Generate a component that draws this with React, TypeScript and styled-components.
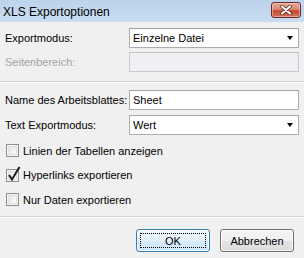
import styled, { createGlobalStyle } from 'styled-components';

const GlobalStyle = createGlobalStyle`
  html, body {
    margin: 0;
    padding: 0;
    background: #f0f0f0;
  }
  * {
    box-sizing: border-box;
  }
`;

const Window = styled.div`
  display: flex;
  flex-direction: column;
  width: 304px;
  height: 258px;
  background: #f0f0f0;
  font-family: 'Liberation Sans', Arial, sans-serif;
  font-size: 11px;
  color: #000;
  overflow: hidden;
`;

const TitleBar = styled.div`
  display: flex;
  align-items: center;
  justify-content: space-between;
  height: 22px;
  padding: 0 3px 0 3px;
  background: linear-gradient(to bottom, #bcd3ec 0%, #c3d8ef 50%, #c9dcf1 100%);
`;

const Title = styled.span`
  font-size: 12px;
  color: #000;
  padding-top: 1px;
`;

const CloseButton = styled.div`
  display: flex;
  align-items: center;
  justify-content: center;
  width: 30px;
  height: 16px;
  margin-top: -3px;
  border: 1px solid #6b2a2a;
  border-radius: 3px;
  background: linear-gradient(to bottom, #e8a493 0%, #d98a77 45%, #c24a32 55%, #d2735c 100%);
  box-shadow: inset 0 0 0 1px rgba(255, 220, 210, 0.5);
`;

const Body = styled.div`
  display: flex;
  flex-direction: column;
  flex: 1;
`;

const Section = styled.div<{ $gap: number; $top: number; $bottom: number }>`
  display: flex;
  flex-direction: column;
  gap: ${({ $gap }) => $gap}px;
  padding: ${({ $top }) => $top}px 5px ${({ $bottom }) => $bottom}px 5px;
`;

const FieldRow = styled.div`
  display: grid;
  grid-template-columns: 124px 170px;
  align-items: center;
  height: 20px;
`;

const Label = styled.span<{ $disabled?: boolean }>`
  color: ${({ $disabled }) => ($disabled ? '#a3a3a3' : '#000')};
  white-space: nowrap;
`;

const Field = styled.div<{ $disabled?: boolean }>`
  position: relative;
  display: flex;
  align-items: center;
  height: 20px;
  padding-left: 3px;
  border: 1px solid ${({ $disabled }) => ($disabled ? '#c9c9cc' : '#abadb3')};
  border-top-color: ${({ $disabled }) => ($disabled ? '#c0c0c4' : '#a0a2a8')};
  background: ${({ $disabled }) => ($disabled ? '#f0f0f4' : '#fff')};
`;

const Arrow = styled.span`
  position: absolute;
  right: 5px;
  top: 7px;
  width: 0;
  height: 0;
  border-left: 3.5px solid transparent;
  border-right: 3.5px solid transparent;
  border-top: 4px solid #000;
`;

const Separator = styled.div`
  height: 2px;
  border-top: 1px solid #d5d5d5;
  border-bottom: 1px solid #fff;
`;

const CheckList = styled.div`
  display: flex;
  flex-direction: column;
  gap: 11.5px;
  padding: 9px 5px 10px 6px;
`;

const CheckRow = styled.div`
  display: flex;
  align-items: center;
  gap: 4px;
  height: 13px;
`;

const Box = styled.span`
  position: relative;
  display: inline-block;
  width: 13px;
  height: 13px;
  border: 1px solid #8e8f8f;
  background: linear-gradient(135deg, #dcdcdc 0%, #f4f4f4 60%, #ffffff 100%);
  box-shadow: inset 0 0 0 1px #f4f4f4, inset 0 0 0 2px #e1e1e1;
`;

const Check = styled.svg`
  position: absolute;
  left: 0px;
  top: -5px;
`;

const Footer = styled.div`
  display: flex;
  justify-content: flex-end;
  gap: 10px;
  padding: 11px 10px 0 0;
`;

const Button = styled.div<{ $default?: boolean }>`
  position: relative;
  display: flex;
  align-items: center;
  justify-content: center;
  width: 74px;
  height: 23px;
  border: 1px solid ${({ $default }) => ($default ? '#3c7fb1' : '#707070')};
  border-radius: 3px;
  background: ${({ $default }) =>
    $default
      ? 'linear-gradient(to bottom, #eef6fd 0%, #e3f0fc 50%, #d6eafb 51%, #cfe5fa 100%)'
      : 'linear-gradient(to bottom, #f4f4f4 0%, #eeeeee 50%, #e4e4e4 51%, #dcdcdc 100%)'};
  box-shadow: inset 0 0 0 1px rgba(255, 255, 255, 0.7);
`;

const FocusRing = styled.span`
  position: absolute;
  inset: 3px;
  border: 1px dotted #000;
`;

function CheckBox({ label, checked }: { label: string; checked?: boolean }) {
  return (
    <CheckRow>
      <Box>
        {checked && (
          <Check width="14" height="17" viewBox="0 0 14 17">
            <path d="M2 10 L5 14.5 L12.5 2" fill="none" stroke="#1a1a1a" strokeWidth="2" />
          </Check>
        )}
      </Box>
      <span>{label}</span>
    </CheckRow>
  );
}

export default function App() {
  return (
    <>
      <GlobalStyle />
      <Window>
        <TitleBar>
          <Title>XLS Exportoptionen</Title>
          <CloseButton>
            <svg width="12" height="10" viewBox="0 0 12 10">
              <path d="M2 1.5 L10 8.5 M10 1.5 L2 8.5" stroke="#5a1a10" strokeWidth="3.6" strokeLinecap="round" />
              <path d="M2 1.5 L10 8.5 M10 1.5 L2 8.5" stroke="#fff" strokeWidth="2.2" strokeLinecap="round" />
            </svg>
          </CloseButton>
        </TitleBar>
        <Body>
          <Section $gap={4} $top={6} $bottom={9}>
            <FieldRow>
              <Label>Exportmodus:</Label>
              <Field>
                Einzelne Datei
                <Arrow />
              </Field>
            </FieldRow>
            <FieldRow>
              <Label $disabled>Seitenbereich:</Label>
              <Field $disabled />
            </FieldRow>
          </Section>
          <Separator />
          <Section $gap={5} $top={7} $bottom={0}>
            <FieldRow>
              <Label>Name des Arbeitsblattes:</Label>
              <Field>Sheet</Field>
            </FieldRow>
            <FieldRow>
              <Label>Text Exportmodus:</Label>
              <Field>
                Wert
                <Arrow />
              </Field>
            </FieldRow>
          </Section>
          <CheckList>
            <CheckBox label="Linien der Tabellen anzeigen" />
            <CheckBox label="Hyperlinks exportieren" checked />
            <CheckBox label="Nur Daten exportieren" />
          </CheckList>
          <Separator />
          <Footer>
            <Button $default>
              <FocusRing />
              OK
            </Button>
            <Button>Abbrechen</Button>
          </Footer>
        </Body>
      </Window>
    </>
  );
}
